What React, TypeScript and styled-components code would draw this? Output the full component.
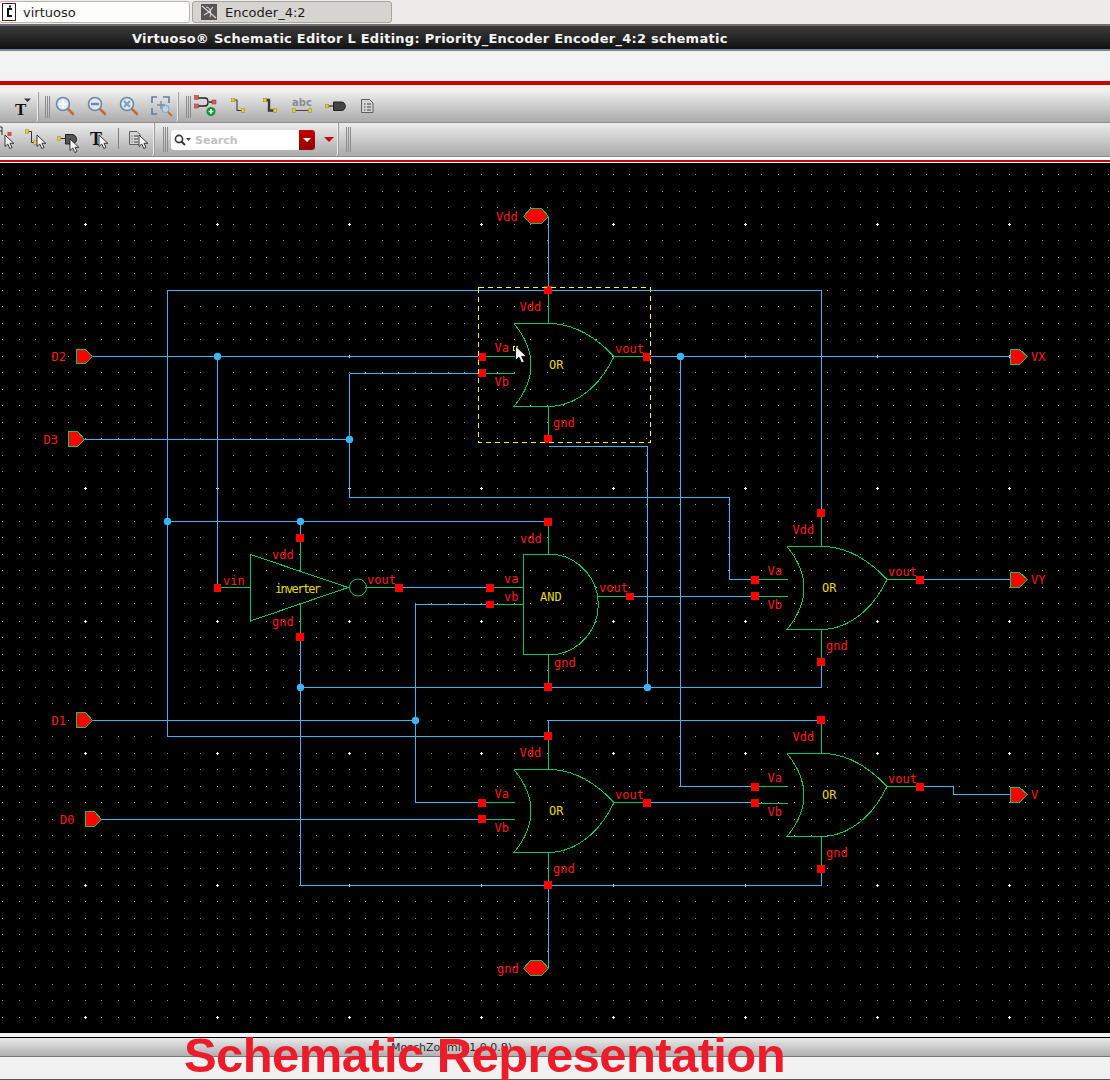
import React from 'react';
import styled, { createGlobalStyle } from 'styled-components';

const Global = createGlobalStyle`
  html, body { margin: 0; padding: 0; background: #000; }
`;

const Page = styled.div`
  position: relative;
  width: 1110px;
  height: 1080px;
  overflow: hidden;
  display: flex;
  flex-direction: column;
  font-family: "DejaVu Sans", sans-serif;
  background: #f2f2f2;
`;

const TabStrip = styled.div`
  height: 24px;
  flex: none;
  box-sizing: border-box;
  padding-top: 1px;
  display: flex;
  gap: 2px;
  background: #edecea;
`;

const Tab = styled.div<{ $active?: boolean; $width: number }>`
  width: ${p => p.$width}px;
  height: 22px;
  box-sizing: border-box;
  display: flex;
  align-items: center;
  gap: ${p => (p.$active ? 7 : 8)}px;
  padding-left: ${p => (p.$active ? 2 : 8)}px;
  margin-left: ${p => (p.$active ? -1 : 0)}px;
  border: 1px solid ${p => (p.$active ? '#b5b3ae' : '#a5a39f')};
  border-radius: 3px;
  background: ${p => (p.$active ? '#fdfdfc' : '#d6d4d0')};
  font-size: 13px;
  color: #1c1c1c;
`;

const TitleBar = styled.div`
  height: 27px;
  flex: none;
  box-sizing: border-box;
  padding-left: 132px;
  display: flex;
  align-items: center;
  border-top: 2px solid #6e6e6e;
  border-bottom: 1px solid #80858c;
  box-shadow: inset 0 -1px 0 #6d8bb0;
  background: linear-gradient(#3c3c3c, #101010);
  color: #f4f4f4;
  font-size: 13px;
  font-weight: 700;
  letter-spacing: 0.26px;
  white-space: pre;
`;

const MenuBand = styled.div`
  height: 30px;
  flex: none;
  background: #f3f3f3;
`;

const RedRule = styled.div<{ $height: number }>`
  height: ${p => p.$height}px;
  flex: none;
  background: #cc0000;
`;

const Spacer = styled.div<{ $height: number; $color: string }>`
  height: ${p => p.$height}px;
  flex: none;
  background: ${p => p.$color};
`;

const ToolRow = styled.div<{ $height: number }>`
  height: ${p => p.$height}px;
  flex: none;
  box-sizing: border-box;
  display: flex;
  border-bottom: 1px solid #8e8e8e;
  background: linear-gradient(#ececec, #aaaaaa);
`;

const ToolGroup = styled.div<{ $width?: number }>`
  ${p => (p.$width ? `width: ${p.$width}px; flex: none;` : 'flex: 1;')}
  box-sizing: border-box;
  display: flex;
  align-items: stretch;
  padding-right: 1px;
  border-right: 1px solid #9c9c9c;
  border-radius: 0 0 3px 0;
  box-shadow: inset -1px 0 0 #efefef;
  &:last-child { border-right: none; box-shadow: none; }
`;

const Grip = styled.div<{ $left: number; $right?: number }>`
  flex: none;
  width: 5px;
  margin: 4px ${p => p.$right ?? 0}px 4px ${p => p.$left}px;
  background: repeating-linear-gradient(90deg, #8c8c8c 0 1px, transparent 1px 2px);
`;

const IconSlot = styled.div<{ $width: number }>`
  flex: none;
  width: ${p => p.$width}px;
  display: flex;
  justify-content: center;
  align-items: flex-start;
`;

const Divider = styled.div`
  flex: none;
  width: 1px;
  margin: 5px 5px 7px 6px;
  background: #7e7e7e;
`;

const SearchBox = styled.div`
  flex: none;
  width: 144px;
  height: 20px;
  margin: 7px 0 0 3px;
  box-sizing: border-box;
  display: flex;
  align-items: center;
  background: #ffffff;
  border-radius: 3px;
  overflow: hidden;
  color: #c2c2c2;
  font-size: 11px;
  font-weight: 700;
`;

const SearchGlyph = styled.div`
  flex: none;
  width: 24px;
  height: 20px;
`;

const SearchText = styled.span`
  flex: 1;
  padding-top: 1px;
`;

const SearchDrop = styled.div`
  flex: none;
  width: 16px;
  height: 20px;
  display: flex;
  align-items: center;
  justify-content: center;
  background: linear-gradient(#c40000, #900000);
  &::after {
    content: '';
    border: 4px solid transparent;
    border-top: 4px solid #ffffff;
    border-bottom: 0;
  }
`;

const RedCaret = styled.div`
  flex: none;
  align-self: center;
  margin: 0 0 0 9px;
  border: 5px solid transparent;
  border-top: 5px solid #c80000;
  border-bottom: 0;
`;

const Canvas = styled.svg`
  display: block;
  flex: none;
  width: 1110px;
  height: 870px;
  background: #000;
`;

const StatusBar = styled.div`
  height: 20px;
  flex: none;
  box-sizing: border-box;
  padding: 0 0 0 391px;
  display: flex;
  align-items: center;
  border-top: 1px solid #000;
  border-bottom: 1px solid #777;
  background: linear-gradient(#e9e9e9, #b0b0b0);
  color: #2a2a2a;
  font-size: 11px;
`;

const BottomBand = styled.div`
  flex: 1;
  background: #f2f2f2;
  border-bottom: 1px solid #555;
`;

const Caption = styled.div`
  position: absolute;
  left: 184px;
  top: 1030px;
  font-family: "Liberation Sans", Arial, sans-serif;
  font-size: 49px;
  font-weight: 700;
  line-height: 50px;
  letter-spacing: -0.6px;
  color: #ed1c2a;
  white-space: nowrap;
`;

const Wire = styled.path`
  fill: none;
  stroke: #3cb4f6;
  stroke-width: 1;
  shape-rendering: crispEdges;
`;

const GateLine = styled.path`
  fill: none;
  stroke: #00c864;
  stroke-width: 1;
  shape-rendering: crispEdges;
`;

const Ring = styled.circle`
  fill: none;
  stroke: #00c864;
  stroke-width: 1;
`;

const Junction = styled.circle`
  fill: #3cb4f6;
`;

const PinSquare = styled.rect`
  fill: #ff0000;
  shape-rendering: crispEdges;
`;

const PortShape = styled.polygon`
  fill: #ff0000;
  stroke: #00c864;
  stroke-width: 1;
  shape-rendering: crispEdges;
`;

const Label = styled.text<{ $tone?: 'yellow' }>`
  font-family: "DejaVu Sans Mono", monospace;
  font-size: 12px;
  fill: ${p => (p.$tone === 'yellow' ? '#e4d81c' : '#ff1a1a')};
  dominant-baseline: central;
`;

const GridDots = styled.path`
  fill: none;
  stroke: #9a9fc0;
  stroke-width: 1;
  shape-rendering: crispEdges;
`;

const GridCross = styled.path`
  fill: none;
  stroke: #ffffff;
  stroke-width: 1;
  shape-rendering: crispEdges;
`;

const Selection = styled.rect`
  fill: none;
  stroke: #ffff00;
  stroke-width: 1;
  stroke-dasharray: 5 4;
  shape-rendering: crispEdges;
`;

const rowY = (k: number) => Math.floor((k >= 0 ? 621 : 620) + 16.5 * k);
const colX = (k: number) => Math.floor(2.5 + 16.5 * k);

let dots = '';
let crosses = '';
for (let r = -27; r <= 25; r++) {
  for (let c = 0; c <= 67; c++) {
    const x = colX(c);
    const y = rowY(r);
    if (y < 163 || y >= 1033) continue;
    if ((c - 5) % 8 === 0 && r % 8 === 0) {
      crosses += `M${x - 1} ${y + 0.5}h3M${x + 0.5} ${y - 1}v3`;
    } else {
      dots += `M${x} ${y + 0.5}h1`;
    }
  }
}

const wires = [
  'M548.5 216.5V290.5',
  'M167.5 736.5V290.5H821.5V513',
  'M93 356.5H482',
  'M647 356.5H1010',
  'M85 439.5H349.5',
  'M349.5 373.5H482',
  'M349.5 373.5V497.5H729.5V579.5H754',
  'M217.5 356.5V588',
  'M548.5 446.5H647.5V687',
  'M167.5 521.5H548',
  'M300.5 521.5V538',
  'M300.5 637V885.5',
  'M300.5 687.5H821.5V662',
  'M300.5 885.5H821.5V869',
  'M399 587.5H490',
  'M490 604.5H415.5V802.5H482',
  'M93 720.5H415.5',
  'M167.5 736.5H548',
  'M548.5 737V720.5H821',
  'M680.5 356.5V786.5H754',
  'M647 802.5H754',
  'M630 596.5H754',
  'M101 819.5H482',
  'M920 579.5H1010',
  'M920 786.5H953.5V794.5H1010',
  'M548.5 885.5V968',
];

const junctions = [
  [217.5, 356.5],
  [349.5, 439.5],
  [680.5, 356.5],
  [167.5, 521.5],
  [300.5, 521.5],
  [300.5, 687.5],
  [647.5, 687.5],
  [415.5, 720.5],
];

const Arrow = ({ x, y, scale = 1 }: { x: number; y: number; scale?: number }) => (
  <polygon
    transform={`translate(${x} ${y}) scale(${scale})`}
    points="0,0 0,11.5 2.8,9 4.8,13.5 7,12.5 5,8.3 8.8,8.3"
    fill="#f4f4f4"
    stroke="#111"
    strokeWidth={0.8}
    strokeLinejoin="round"
  />
);

const OrGate = ({ x, y }: { x: number; y: number }) => (
  <g>
    <GateLine
      d={`M${x} ${y + 0.5}H${x + 39}C${x + 60} ${y + 2} ${x + 80} ${y + 12} ${x + 100} ${y + 33.5}C${x + 90} ${y + 55} ${x + 70} ${y + 80} ${x + 39} ${y + 83.5}H${x}Q${x + 34} ${y + 42} ${x} ${y + 0.5}`}
    />
    <GateLine
      d={`M${x + 34.5} ${y - 33}V${y}M${x + 34.5} ${y + 84}V${y + 116}M${x - 32} ${y + 33.5}H${x + 1}M${x - 32} ${y + 50.5}H${x + 1}M${x + 100} ${y + 33.5}H${x + 133}`}
    />
    <PinSquare x={x + 30} y={y - 37} width={8} height={8} />
    <PinSquare x={x + 30} y={y + 112} width={8} height={8} />
    <PinSquare x={x - 36} y={y + 30} width={8} height={8} />
    <PinSquare x={x - 36} y={y + 46} width={8} height={8} />
    <PinSquare x={x + 129} y={y + 30} width={8} height={8} />
    <Label x={x + 5.5} y={y - 16}>Vdd</Label>
    <Label x={x - 19.5} y={y + 25}>Va</Label>
    <Label x={x - 19.5} y={y + 59}>Vb</Label>
    <Label x={x + 35} y={y + 42} $tone="yellow">OR</Label>
    <Label x={x + 101} y={y + 26}>vout</Label>
    <Label x={x + 39} y={y + 100}>gnd</Label>
  </g>
);

const CanvasDrawing = () => (
  <Canvas viewBox="0 163 1110 870">
    <GridDots d={dots} />
    <GridCross d={crosses} />
    {wires.map(d => <Wire key={d} d={d} />)}
    {junctions.map(([cx, cy]) => <Junction key={`${cx}-${cy}`} cx={cx} cy={cy} r={3.7} />)}

    <OrGate x={514} y={323} />
    <OrGate x={787} y={546} />
    <OrGate x={514} y={769} />
    <OrGate x={787} y={753} />

    {/* inverter */}
    <GateLine d="M250.5 554.5V621L348 587.5ZM218 587.5H250.5M366 587.5H399M300.5 538V571M300.5 604V637" />
    <Ring cx={358} cy={587.5} r={8.5} />
    <PinSquare x={214} y={584} width={7} height={8} />
    <PinSquare x={296} y={534} width={8} height={8} />
    <PinSquare x={296} y={633} width={8} height={8} />
    <PinSquare x={395} y={584} width={8} height={8} />
    <Label x={223} y={581}>vin</Label>
    <Label x={272} y={555}>vdd</Label>
    <Label x={272} y={622}>gnd</Label>
    <Label x={367} y={580}>vout</Label>
    <Label x={275} y={588.5} $tone="yellow" textLength={46}>inverter</Label>

    {/* and gate */}
    <GateLine d="M523.5 554.5H556.5A50.8 50.8 0 0 1 556.5 654.5H523.5ZM490 587.5H523.5M490 604.5H523.5M598 596.5H630M548.5 521V554M548.5 655V687" />
    <PinSquare x={486} y={584} width={8} height={8} />
    <PinSquare x={486} y={601} width={8} height={7} />
    <PinSquare x={626} y={593} width={8} height={7} />
    <PinSquare x={544} y={518} width={8} height={8} />
    <PinSquare x={544} y={683} width={8} height={8} />
    <Label x={520} y={539}>vdd</Label>
    <Label x={504} y={579}>va</Label>
    <Label x={504} y={597}>vb</Label>
    <Label x={540} y={597} $tone="yellow">AND</Label>
    <Label x={599} y={588}>vout</Label>
    <Label x={554} y={663}>gnd</Label>

    {/* ports */}
    <PortShape points="76.5,349.5 85.5,349.5 92.5,356.5 85.5,363.5 76.5,363.5" />
    <PortShape points="68.5,431.5 77.5,431.5 84.5,439.5 77.5,446.5 68.5,446.5" />
    <PortShape points="76.5,712.5 85.5,712.5 92.5,720.5 85.5,727.5 76.5,727.5" />
    <PortShape points="85.5,811.5 94.5,811.5 101.5,819.5 94.5,826.5 85.5,826.5" />
    <PortShape points="1010.5,349.5 1019.5,349.5 1027.5,356.5 1019.5,364.5 1010.5,364.5" />
    <PortShape points="1010.5,572.5 1019.5,572.5 1027.5,579.5 1019.5,587.5 1010.5,587.5" />
    <PortShape points="1010.5,787.5 1019.5,787.5 1027.5,794.5 1019.5,802.5 1010.5,802.5" />
    <PortShape points="523.5,216.5 530.5,208.5 541.5,208.5 548.5,216.5 541.5,223.5 530.5,223.5" />
    <PortShape points="523.5,968.5 530.5,960.5 541.5,960.5 548.5,968.5 541.5,975.5 530.5,975.5" />
    <Label x={51.5} y={356.5}>D2</Label>
    <Label x={43.5} y={439.5}>D3</Label>
    <Label x={51.5} y={720.5}>D1</Label>
    <Label x={60} y={819.5}>D0</Label>
    <Label x={1031} y={356.5}>VX</Label>
    <Label x={1031} y={579.5}>VY</Label>
    <Label x={1031} y={794.5}>V</Label>
    <Label x={496} y={216.5}>Vdd</Label>
    <Label x={497} y={969}>gnd</Label>

    <Selection x={478.5} y={287.5} width={172} height={154.5} />
    <rect x={513} y={346} width={4} height={4} fill="none" stroke="#ffff00" shapeRendering="crispEdges" />
    <Arrow x={515.5} y={346} scale={1.25} />
  </Canvas>
);

const Pad = ({ x, y, s = 3.5 }: { x: number; y: number; s?: number }) => (
  <rect x={x - s / 2} y={y - s / 2} width={s} height={s} fill="#e5d21e" stroke="#8d8a3a" strokeWidth={0.5} />
);

type LensKind = 'plus' | 'minus' | 'fit';

const Lens = ({ kind }: { kind: LensKind }) => (
  <svg width="28" height="30" viewBox="0 0 28 30">
    <line x1="18" y1="17" x2="23" y2="22" stroke="#c0702c" strokeWidth="2.6" strokeLinecap="round" />
    <circle cx="13" cy="12" r="6.5" fill="#dde8f2" stroke="#6a8bab" strokeWidth="1.6" />
    {kind === 'plus' && <path d="M9 12H17M13 8V16" stroke="#fff" strokeWidth="2.2" />}
    {kind === 'minus' && <path d="M9 12H17" stroke="#6a8bab" strokeWidth="2.4" />}
    {kind === 'fit' && <path d="M10 9L16 15M16 9L10 15" stroke="#7f9fbd" strokeWidth="2" />}
  </svg>
);

const ZoomArea = () => (
  <svg width="28" height="30" viewBox="0 0 28 30">
    <path d="M6 11V5H11M17 5H23V11M6 16V22H11" fill="none" stroke="#5f7f9f" strokeWidth="1.6" />
    <path d="M11 13H19M15 9V17" stroke="#6f8fae" strokeWidth="1.4" />
    <circle cx="19.5" cy="17" r="3.6" fill="#bcd4ea" stroke="#7f9fbd" />
    <line x1="22" y1="20" x2="26" y2="24" stroke="#c0702c" strokeWidth="1.8" />
  </svg>
);

const TextTool = () => (
  <svg width="30" height="30" viewBox="0 0 30 30">
    <text x="11" y="23" fontFamily="Liberation Serif, serif" fontSize="17" fontWeight="700" fill="#111">T</text>
    <polygon points="20,6.5 27,6.5 23.5,10" fill="#333" />
  </svg>
);

const CreateInstance = () => (
  <svg width="28" height="30" viewBox="0 0 28 30">
    <path d="M6 6H14C18 6 18 14 14 14H6M18 10H24" fill="none" stroke="#222" strokeWidth="1.4" />
    <rect x="3.5" y="3.5" width="4" height="4" fill="#d06060" stroke="#8a3030" strokeWidth="0.5" />
    <rect x="3.5" y="12" width="4" height="4" fill="#d06060" stroke="#8a3030" strokeWidth="0.5" />
    <rect x="21" y="8" width="4" height="4" fill="#d06060" stroke="#8a3030" strokeWidth="0.5" />
    <circle cx="20" cy="19.5" r="4.5" fill="#109030" />
    <path d="M17.5 19.5H22.5M20 17V22" stroke="#fff" strokeWidth="1.5" />
  </svg>
);

const WireTool = ({ wide }: { wide?: boolean }) => (
  <svg width="28" height="30" viewBox="0 0 28 30">
    <path d="M9.5 8H13V18.5H18" fill="none" stroke="#3a3a3a" strokeWidth={wide ? 2.4 : 1.1} />
    <Pad x={9} y={8} />
    <Pad x={19} y={18.5} />
  </svg>
);

const LabelTool = () => (
  <svg width="28" height="30" viewBox="0 0 28 30">
    <text x="14" y="14" textAnchor="middle" fontFamily="DejaVu Sans, sans-serif" fontSize="10" fontWeight="700" fill="#8b8b8b">abc</text>
    <line x1="6" y1="18.5" x2="22" y2="18.5" stroke="#444" strokeWidth="1" />
    <Pad x={6} y={18.5} />
    <Pad x={22} y={18.5} />
  </svg>
);

const PinTool = () => (
  <svg width="28" height="30" viewBox="0 0 28 30">
    <line x1="6" y1="14" x2="13" y2="14" stroke="#333" strokeWidth="1.2" />
    <path d="M12.5 10H20.5C25.5 10 25.5 18.5 20.5 18.5H12.5Z" fill="#444" stroke="#222" />
    <Pad x={6} y={14} />
  </svg>
);

const DocTool = () => (
  <svg width="28" height="30" viewBox="0 0 28 30">
    <path d="M8.5 7.5H16.5L20 11V20.5H8.5Z" fill="#d4d4d4" stroke="#5e5e5e" />
    <path d="M11 12H12.5M14 12H18M11 15H12.5M14 15H18M11 18H12.5M14 18H18" stroke="#3f3f3f" />
  </svg>
);

const CursorInstance = () => (
  <svg width="22" height="33" viewBox="0 0 22 33">
    <path d="M0 4H2M0 8H2M2 4V12" stroke="#333" />
    <rect x="7.5" y="9" width="4" height="4" fill="#d05050" />
    <Arrow x={5} y={12} scale={1} />
  </svg>
);

const CursorWire = () => (
  <svg width="28" height="33" viewBox="0 0 28 33">
    <path d="M5 8.5H9.5V19.5H14" fill="none" stroke="#333" />
    <Pad x={5} y={8.5} />
    <Pad x={13.5} y={19.5} />
    <Arrow x={15} y={12} scale={1} />
  </svg>
);

const CursorPin = () => (
  <svg width="38" height="33" viewBox="0 0 38 33">
    <line x1="9" y1="15.5" x2="16" y2="15.5" stroke="#333" />
    <path d="M15.5 11.5H22C28 11.5 28 21 22 21H15.5Z" fill="#555" stroke="#222" />
    <Pad x={9} y={15.5} />
    <Arrow x={20} y={16} scale={1} />
  </svg>
);

const CursorText = () => (
  <svg width="24" height="33" viewBox="0 0 24 33">
    <text x="2" y="22" fontFamily="Liberation Serif, serif" fontSize="18" fontWeight="700" fill="#111">T</text>
    <Arrow x={11} y={12} scale={1} />
  </svg>
);

const CursorDoc = () => (
  <svg width="28" height="33" viewBox="0 0 28 33">
    <path d="M5.5 8.5H13L16 11.5V21.5H5.5Z" fill="#d4d4d4" stroke="#5e5e5e" />
    <path d="M7.5 13H8.5M10 13H14M7.5 16H8.5M10 16H14M7.5 19H8.5M10 19H14" stroke="#3f3f3f" />
    <Arrow x={15} y={12} scale={1} />
  </svg>
);

const SearchMark = () => (
  <svg width="24" height="20" viewBox="0 0 24 20">
    <circle cx="8" cy="9" r="3.6" fill="none" stroke="#333" strokeWidth="1.6" />
    <line x1="10.5" y1="11.5" x2="14" y2="15" stroke="#333" strokeWidth="2" />
    <polygon points="15,8 20,8 17.5,11" fill="#444" />
  </svg>
);

const CadenceMark = () => (
  <svg width="14" height="18" viewBox="0 0 14 18">
    <rect x="0.5" y="0.5" width="13" height="17" fill="#fff" stroke="#222" />
    <path d="M0 0H4M10 0H14M0 18H4M10 18H14" stroke="#c00000" strokeWidth="2" />
    <path d="M10 6H6V13H10M7 3.5H9" fill="none" stroke="#111" strokeWidth="2" />
  </svg>
);

const EncoderMark = () => (
  <svg width="16" height="16" viewBox="0 0 16 16">
    <rect width="16" height="16" fill="#555" />
    <path d="M1 2L8 8L15 14M3 11L8 8L12 3M5 3C9 3 11 9 9 13" fill="none" stroke="#d8d8d8" strokeWidth="1.1" />
  </svg>
);

export default function App() {
  return (
    <Page>
      <Global />
      <TabStrip>
        <Tab $active $width={191}><CadenceMark />virtuoso</Tab>
        <Tab $width={200}><EncoderMark />Encoder_4:2</Tab>
      </TabStrip>
      <TitleBar>Virtuoso® Schematic Editor L Editing: Priority_Encoder Encoder_4:2 schematic</TitleBar>
      <MenuBand />
      <RedRule $height={4} />
      <Spacer $height={7} $color="#f0f0f0" />
      <ToolRow $height={31}>
        <ToolGroup $width={39}>
          <IconSlot $width={38}><TextTool /></IconSlot>
        </ToolGroup>
        <ToolGroup $width={140}>
          <Grip $left={6} $right={-2} />
          <IconSlot $width={32}><Lens kind="plus" /></IconSlot>
          <IconSlot $width={32}><Lens kind="minus" /></IconSlot>
          <IconSlot $width={32}><Lens kind="fit" /></IconSlot>
          <IconSlot $width={32}><ZoomArea /></IconSlot>
        </ToolGroup>
        <ToolGroup>
          <Grip $left={7} $right={-2} />
          <IconSlot $width={32}><CreateInstance /></IconSlot>
          <IconSlot $width={33}><WireTool /></IconSlot>
          <IconSlot $width={32}><WireTool wide /></IconSlot>
          <IconSlot $width={32}><LabelTool /></IconSlot>
          <IconSlot $width={33}><PinTool /></IconSlot>
          <IconSlot $width={32}><DocTool /></IconSlot>
        </ToolGroup>
      </ToolRow>
      <ToolRow $height={34}>
        <ToolGroup $width={155}>
          <IconSlot $width={22}><CursorInstance /></IconSlot>
          <IconSlot $width={28}><CursorWire /></IconSlot>
          <IconSlot $width={38}><CursorPin /></IconSlot>
          <IconSlot $width={24}><CursorText /></IconSlot>
          <Divider />
          <IconSlot $width={28}><CursorDoc /></IconSlot>
        </ToolGroup>
        <ToolGroup $width={184}>
          <Grip $left={8} />
          <SearchBox>
            <SearchGlyph><SearchMark /></SearchGlyph>
            <SearchText>Search</SearchText>
            <SearchDrop />
          </SearchBox>
          <RedCaret />
        </ToolGroup>
        <ToolGroup>
          <Grip $left={7} />
        </ToolGroup>
      </ToolRow>
      <Spacer $height={3} $color="#ffffff" />
      <RedRule $height={2} />
      <Spacer $height={1} $color="#ffffff" />
      <CanvasDrawing />
      <Spacer $height={4} $color="#f2f2f2" />
      <StatusBar>MoschZoomit(1.0 0.8)</StatusBar>
      <BottomBand />
      <Caption>Schematic Representation</Caption>
    </Page>
  );
}
